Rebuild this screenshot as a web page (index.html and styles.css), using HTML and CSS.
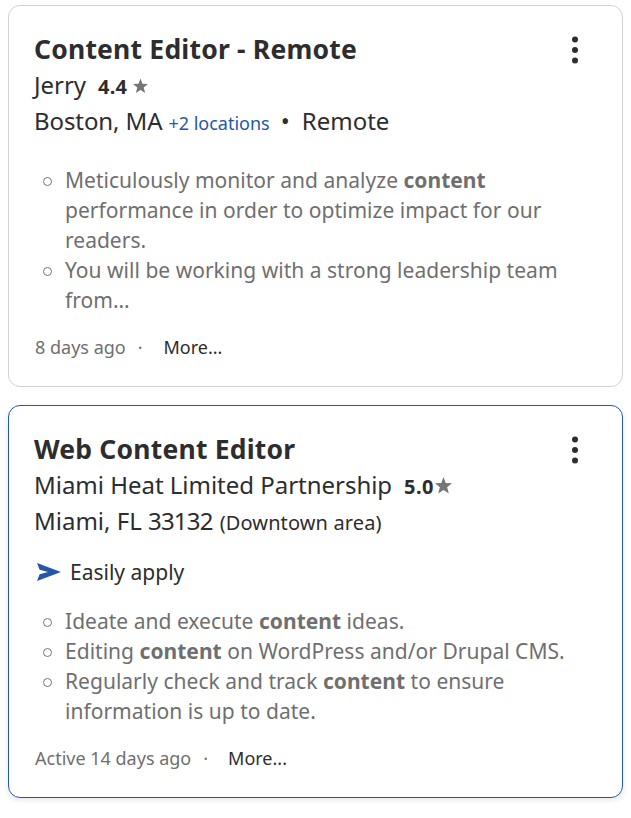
FILE: index.html
```html
<!DOCTYPE html>
<html lang="en">
<head>
<meta charset="utf-8">
<title>Job results</title>
<link rel="stylesheet" href="styles.css">
</head>
<body>
<main class="results">
  <article class="card">
    <header class="card-head">
      <h2 class="title">Content Editor - Remote</h2>
      <svg class="kebab" viewBox="0 0 8 28"><circle cx="4" cy="3.500" r="3"/><circle cx="4" cy="14" r="3"/><circle cx="4" cy="24.500" r="3"/></svg>
    </header>
    <div class="company"><span>Jerry</span><b class="rating">4.4</b><svg class="star spaced" viewBox="0 0 16 16"><path d="M8 0l2.100 5.600 5.900.3-4.600 3.800L13 15.500 8 12.200 3 15.500l1.600-5.800L0 5.900l5.900-.3z"/></svg></div>
    <div class="place"><span class="city">Boston, MA</span><a class="more-loc">+2 locations</a><span class="bullet">•</span><span>Remote</span></div>
    <ul class="snippet">
      <li>Meticulously monitor and analyze <b>content</b> performance in order to optimize impact for our readers.</li>
      <li>You will be working with a strong leadership team from…</li>
    </ul>
    <footer class="meta"><span>8 days ago</span><span class="dot">·</span><a class="more">More...</a></footer>
  </article>
  <article class="card active">
    <header class="card-head">
      <h2 class="title">Web Content Editor</h2>
      <svg class="kebab" viewBox="0 0 8 28"><circle cx="4" cy="3.500" r="3"/><circle cx="4" cy="14" r="3"/><circle cx="4" cy="24.500" r="3"/></svg>
    </header>
    <div class="company"><span>Miami Heat Limited Partnership</span><b class="rating">5.0</b><svg class="star" viewBox="0 0 16 16"><path d="M8 0l2.100 5.600 5.900.3-4.600 3.800L13 15.500 8 12.200 3 15.500l1.600-5.800L0 5.900l5.900-.3z"/></svg></div>
    <div class="place"><span>Miami, FL <span class="zip">33132</span></span><span class="area">(Downtown area)</span></div>
    <div class="apply"><svg class="send" viewBox="0 0 24 18"><path d="M0 0L24 9L0 18L2.600 11.200L11 9L2.600 6.800z"/></svg><span>Easily apply</span></div>
    <ul class="snippet">
      <li>Ideate and execute <b>content</b> ideas.</li>
      <li>Editing <b>content</b> on WordPress and/or Drupal CMS.</li>
      <li>Regularly check and track <b>content</b> to ensure<br>information is up to date.</li>
    </ul>
    <footer class="meta"><span>Active 14 days ago</span><span class="dot">·</span><a class="more">More...</a></footer>
  </article>
</main>
</body>
</html>
```
FILE: styles.css
```css
* { box-sizing: border-box; }
body { margin: 0; background: #fff; color: #2d2d2d; font-family: "Noto Sans", sans-serif; }
.results { display: flex; flex-direction: column; gap: 18px; padding: 5px 8px; }
.card { height: 382px; padding: 25px 25px 0; border: 1px solid #d4d2d0; border-radius: 12px; }
.card.active { height: 393px; border-color: #2557a7; box-shadow: 0 2px 6px rgba(0,0,0,.1); }
.card-head { display: flex; justify-content: space-between; height: 36px; padding-right: 18px; }
.title { margin: 0; font-size: 26.5px; line-height: 36px; font-weight: 700; letter-spacing: .2px; white-space: nowrap; }
.kebab { width: 8px; height: 28px; margin-top: 5px; fill: #2d2d2d; }
.company, .place { display: flex; align-items: baseline; height: 36px; font-size: 24px; line-height: 36px; white-space: nowrap; }
.company { letter-spacing: -.02px; }
.rating { margin-left: 12px; font-size: 20px; letter-spacing: .2px; }
.active .rating { letter-spacing: .4px; }
.star { width: 17px; height: 17px; margin-bottom: -3px; fill: #767676; }
.active .star { margin-left: 1px; }
.star.spaced { width: 15px; height: 16px; margin-left: 6px; }
.city { letter-spacing: -.1px; }
.zip { letter-spacing: -.8px; }
.more-loc { margin-left: 6px; font-size: 18px; color: #2557a7; }
.bullet { margin: 0 12px 0 11px; }
.area { margin-left: 7px; font-size: 20px; letter-spacing: .12px; }
.apply { display: flex; align-items: center; gap: 9px; height: 30px; margin: 18px 0 0 3px; font-size: 21px; }
.send { width: 24px; height: 18px; fill: #2557a7; }
.snippet { margin: 26px 0 0; padding-left: 31px; list-style: none; font-size: 21px; line-height: 30px; letter-spacing: .02px; color: #6f6f6f; }
.snippet li::before { content: ""; display: inline-block; width: 7px; height: 7px; margin: 0 13px 2px -22px; border: 1px solid #767676; border-radius: 50%; }
.active .snippet { margin-top: 19px; }
.meta { display: flex; align-items: center; margin: 19px 0 0 1px; font-size: 18px; line-height: 26px; color: #6f6f6f; }
.dot { margin: 0 21px 0 12px; }
.active .dot { margin-right: 20px; }
.more { color: #2d2d2d; }
```
